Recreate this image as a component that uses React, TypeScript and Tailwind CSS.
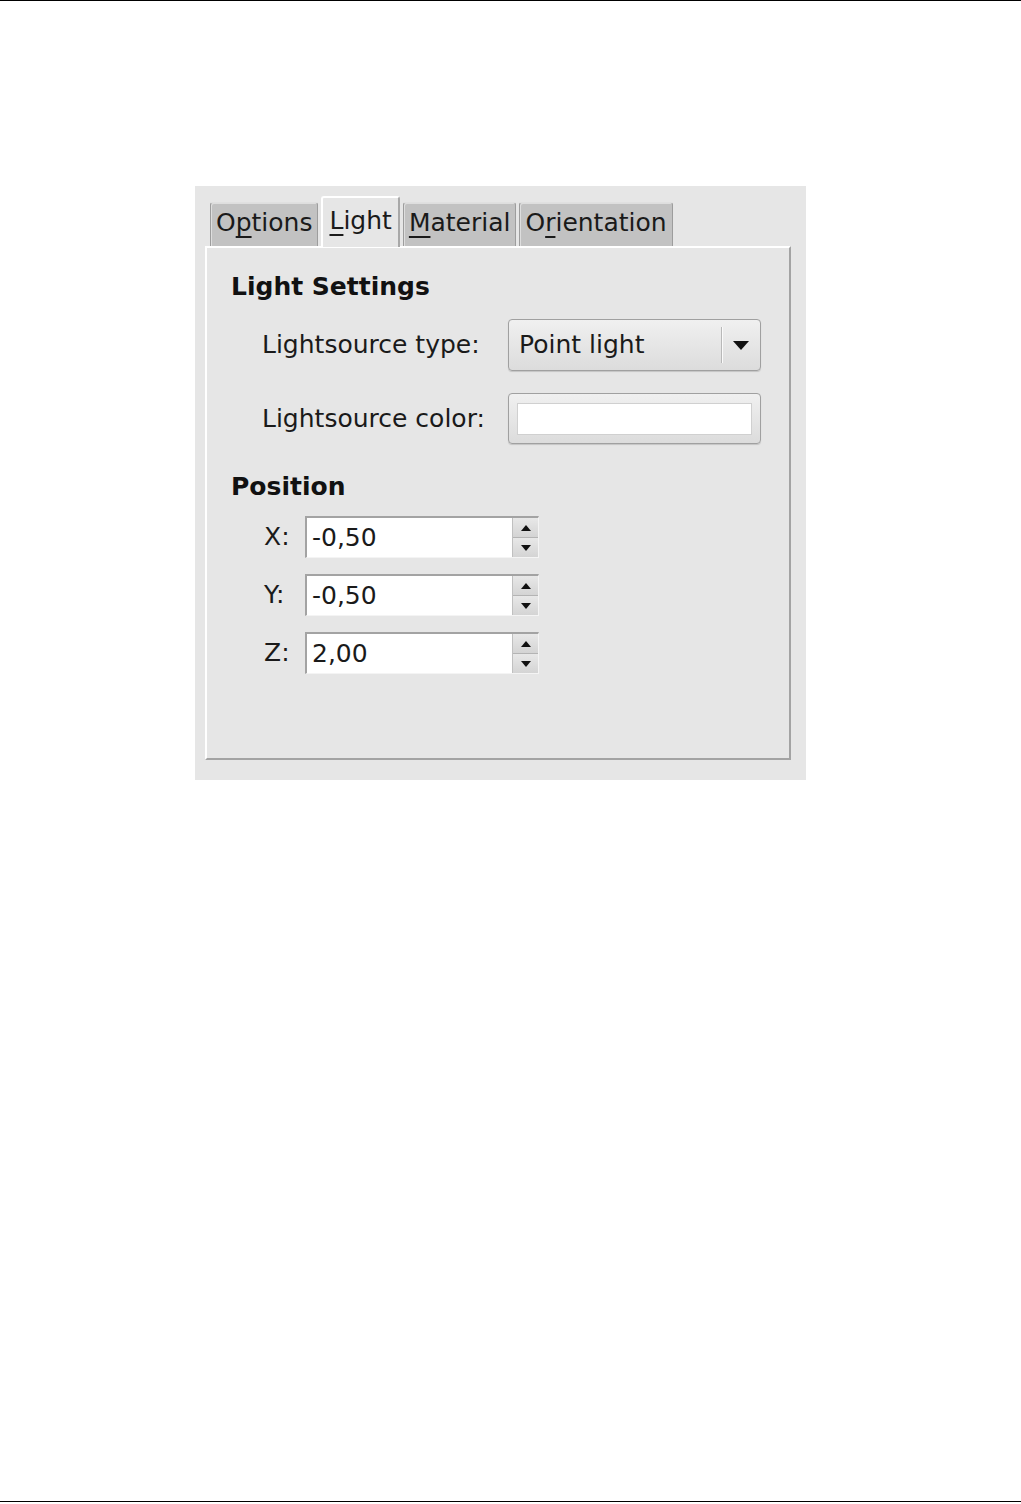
import React from "react";

const font = { fontFamily: '"DejaVu Sans", "Liberation Sans", sans-serif' };

function Tab({ label, mn, active }: { label: string; mn: number; active?: boolean }) {
  const pre = label.slice(0, mn);
  const ch = label[mn];
  const post = label.slice(mn + 1);
  const text = (
    <span>
      {pre}
      <span className="underline decoration-[2px] underline-offset-[5px]">{ch}</span>
      {post}
    </span>
  );
  if (active) {
    return (
      <div className="relative z-10 -mb-px flex h-[51px] items-start rounded-t-[3px] border-l-2 border-t-2 border-r-2 border-l-white border-t-white border-r-[#a8a8a8] bg-[#e6e6e6] px-[6px] pt-[5px] text-[25px] leading-[36px] text-[#1a1a1a]">
        {text}
      </div>
    );
  }
  return (
    <div className="flex h-[44px] items-start rounded-t-[3px] border border-b-0 border-[#9d9d9d] border-t-[#e0e0e0] bg-[#c2c2c2] px-[5px] pt-[2px] text-[25px] leading-[36px] text-[#1a1a1a] shadow-[inset_1px_1px_0_#dedede]">
      {text}
    </div>
  );
}

function SpinRow({ label, value }: { label: string; value: string }) {
  return (
    <div className="flex h-[42px] items-center">
      <div className="w-[41px] text-[25px] leading-[30px] text-[#1a1a1a]">{label}</div>
      <div className="flex h-[42px] w-[234px] border-l-2 border-t-2 border-l-[#a3a3a3] border-t-[#a3a3a3] border-r border-b border-r-[#f4f4f4] border-b-[#f4f4f4] bg-white">
        <div className="flex flex-1 items-center pl-[5px] text-[25px] leading-[30px] text-[#1a1a1a]">{value}</div>
        <div className="flex w-[26px] flex-col border-l border-[#c0c0c0] bg-[#dcdcdc]">
          <div className="flex flex-1 items-center justify-center border-b border-[#b4b4b4] bg-gradient-to-b from-[#e8e8e8] to-[#d4d4d4]">
            <svg width="10" height="6" viewBox="0 0 10 6"><path d="M5 0 L10 6 L0 6 Z" fill="#111" /></svg>
          </div>
          <div className="flex flex-1 items-center justify-center bg-gradient-to-b from-[#e8e8e8] to-[#d4d4d4]">
            <svg width="10" height="6" viewBox="0 0 10 6"><path d="M0 0 L10 0 L5 6 Z" fill="#111" /></svg>
          </div>
        </div>
      </div>
    </div>
  );
}

export default function App() {
  return (
    <div className="relative h-[1504px] w-[1021px] bg-white" style={font}>
      <div className="h-px w-full bg-black" />
      <div className="ml-[195px] mt-[185px] flex h-[594px] w-[611px] flex-col bg-[#e6e6e6] pl-[10px] pr-[15px] pb-[20px] pt-[10px]">
        <div className="flex items-end gap-[3px] pl-[5px]">
          <Tab label="Options" mn={1} />
          <Tab label="Light" mn={0} active />
          <Tab label="Material" mn={0} />
          <Tab label="Orientation" mn={1} />
        </div>
        <div className="flex flex-1 flex-col border-l-2 border-t-2 border-l-white border-t-white border-r-2 border-b-2 border-r-[#a3a3a3] border-b-[#a3a3a3] bg-[#e6e6e6] pl-[24px] pt-[24px]">
          <div className="h-[30px] text-[25px] font-bold leading-[30px] text-[#111]">Light Settings</div>
          <div className="mt-[17px] grid grid-cols-[246px_253px] items-center gap-y-[22px] pl-[31px]">
            <div className="text-[25px] leading-[30px] text-[#1a1a1a]">Lightsource type:</div>
            <div className="flex h-[52px] items-center rounded-[4px] border border-[#a0a0a0] bg-gradient-to-b from-[#f0f0f0] to-[#dcdcdc] shadow-[0_1px_1px_rgba(0,0,0,0.15)]">
              <div className="flex-1 pl-[10px] text-[25px] leading-[30px] text-[#1a1a1a]">Point light</div>
              <div className="h-[36px] w-px bg-[#b8b8b8] shadow-[1px_0_0_#fafafa]" />
              <div className="flex w-[38px] items-center justify-center">
                <svg width="16" height="9" viewBox="0 0 16 9"><path d="M0 0 L16 0 L8 9 Z" fill="#111" /></svg>
              </div>
            </div>
            <div className="text-[25px] leading-[30px] text-[#1a1a1a]">Lightsource color:</div>
            <div className="flex h-[51px] items-center rounded-[4px] border border-[#a0a0a0] bg-gradient-to-b from-[#f0f0f0] to-[#dcdcdc] px-[8px] shadow-[0_1px_1px_rgba(0,0,0,0.15)]">
              <div className="h-[32px] w-full border border-[#d0d0d0] bg-white" />
            </div>
          </div>
          <div className="mt-[28px] h-[30px] text-[25px] font-bold leading-[30px] text-[#111]">Position</div>
          <div className="mt-[14px] flex flex-col gap-[16px] pl-[33px]">
            <SpinRow label="X:" value="-0,50" />
            <SpinRow label="Y:" value="-0,50" />
            <SpinRow label="Z:" value="2,00" />
          </div>
        </div>
      </div>
      <div className="absolute bottom-[2px] left-0 h-px w-full bg-black" />
    </div>
  );
}
